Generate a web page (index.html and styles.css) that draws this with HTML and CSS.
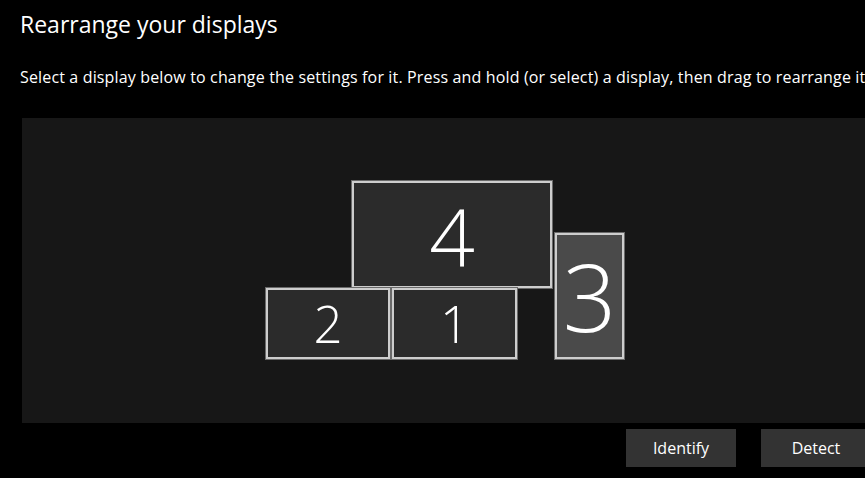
FILE: index.html
```html
<!DOCTYPE html>
<html lang="en">
<head>
    <meta charset="UTF-8">
    <meta name="viewport" content="width=device-width, initial-scale=1.0">
    <title>Display settings</title>
    <link rel="stylesheet" href="styles.css">
</head>
<body>
    <div class="page">
        <h1 class="title">Rearrange your displays</h1>
        <p class="hint">Select a display below to change the settings for it. Press and hold (or select) a display, then drag to rearrange it.</p>

        <div class="arrange">
            <div class="monitor m4"><span>4</span></div>
            <div class="monitor m2"><span>2</span></div>
            <div class="monitor m1"><span>1</span></div>
            <div class="monitor m3 selected"><span>3</span></div>
        </div>

        <div class="actions">
            <button type="button" class="btn">Identify</button>
            <button type="button" class="btn">Detect</button>
        </div>
    </div>
</body>
</html>
```

FILE: styles.css
```css
html, body {
    margin: 0;
    padding: 0;
    background-color: #000;
    overflow: hidden;
}
body {
    font-family: 'Open Sans', 'Noto Sans', sans-serif;
    color: #fff;
    width: 865px;
    height: 478px;
}
.page {
    padding: 7px 0 0 20px;
}
.title {
    margin: 0;
    font-size: 23px;
    font-weight: 400;
    line-height: 34px;
    white-space: nowrap;
}
.hint {
    margin: 25px 0 0 0;
    font-size: 16px;
    letter-spacing: 0.15px;
    line-height: 22px;
    white-space: nowrap;
}
.arrange {
    position: relative;
    margin: 30px 0 0 2px;
    width: 880px;
    height: 305px;
    background-color: #171717;
}
.monitor {
    position: absolute;
    box-sizing: border-box;
    background-color: #2b2b2b;
    border: 2px solid #cdcdcd;
    box-shadow: 0 0 0 1px #6a6a6a;
    display: flex;
    align-items: center;
    justify-content: center;
    font-weight: 300;
    color: #fff;
}
.monitor span {
    line-height: 1;
}
.monitor.selected {
    background-color: #4a4a4a;
}
.m4 {
    left: 330px;
    top: 63px;
    width: 200px;
    height: 107px;
    font-size: 80px;
}
.m2 {
    left: 244px;
    top: 170px;
    width: 124px;
    height: 71px;
    font-size: 51px;
}
.m1 {
    left: 370px;
    top: 170px;
    width: 125px;
    height: 71px;
    font-size: 51px;
}
.m3 {
    left: 533px;
    top: 115px;
    width: 69px;
    height: 126px;
    font-size: 94px;
}
.actions {
    display: flex;
    gap: 25px;
    margin-top: 6px;
    padding-left: 606px;
}
.btn {
    flex: none;
    width: 110px;
    height: 38px;
    background-color: #333;
    color: #fff;
    border: none;
    padding: 0;
    font-family: 'Open Sans', 'Noto Sans', sans-serif;
    font-size: 16px;
}
```
